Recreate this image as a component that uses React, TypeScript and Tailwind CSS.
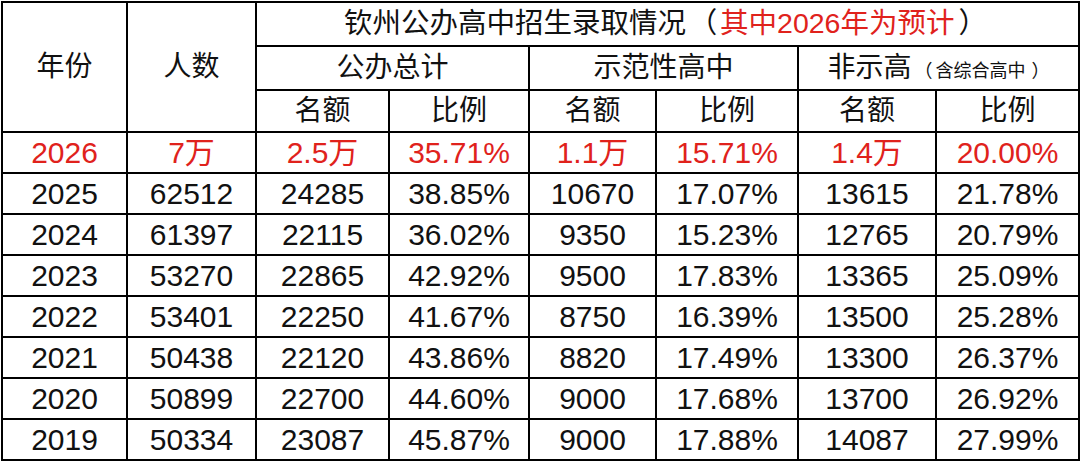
const rows = [
  ['2025', '62512', '24285', '38.85%', '10670', '17.07%', '13615', '21.78%'],
  ['2024', '61397', '22115', '36.02%', '9350', '15.23%', '12765', '20.79%'],
  ['2023', '53270', '22865', '42.92%', '9500', '17.83%', '13365', '25.09%'],
  ['2022', '53401', '22250', '41.67%', '8750', '16.39%', '13500', '25.28%'],
  ['2021', '50438', '22120', '43.86%', '8820', '17.49%', '13300', '26.37%'],
  ['2020', '50899', '22700', '44.60%', '9000', '17.68%', '13700', '26.92%'],
  ['2019', '50334', '23087', '45.87%', '9000', '17.88%', '14087', '27.99%'],
];

const forecast = ['2026', '7万', '2.5万', '35.71%', '1.1万', '15.71%', '1.4万', '20.00%'];

const widths = [125, 129, 133, 140, 127, 142, 138, 143];

const cell = 'border-2 border-black text-center align-middle p-0 leading-none';

export default function App() {
  return (
    <div
      className="w-[1080px] h-[461px] bg-white overflow-hidden text-[#111]"
      style={{ fontFamily: '"Liberation Sans", "Noto Sans CJK SC", sans-serif' }}
    >
      <table className="border-collapse table-fixed w-[1077px] mt-[1px] ml-[1px]">
        <colgroup>
          {widths.map((w, i) => (
            <col key={i} style={{ width: w }} />
          ))}
        </colgroup>
        <thead>
          <tr className="h-[44px]">
            <th rowSpan={3} className={`${cell} font-normal text-[28px]`}>年份</th>
            <th rowSpan={3} className={`${cell} font-normal text-[28px]`}>人数</th>
            <th colSpan={6} className={`${cell} font-normal text-[28.5px] pb-[2px] pr-[4px] whitespace-nowrap`}>
              钦州公办高中招生录取情况
              <span className="inline-flex w-[34px] justify-center">（</span>
              <span className="text-[#e0221c]">其中2026年为预计</span>
              <span className="ml-[4px]">）</span>
            </th>
          </tr>
          <tr className="h-[44px]">
            <th colSpan={2} className={`${cell} font-normal text-[28px]`}>公办总计</th>
            <th colSpan={2} className={`${cell} font-normal text-[28px]`}>示范性高中</th>
            <th colSpan={2} className={`${cell} font-normal text-[28px] whitespace-nowrap`}>
              非示高
              <span className="text-[18px]">
                <span className="inline-flex w-[24px] justify-center">（</span>
                含综合高中
                <span className="ml-[6px]">）</span>
              </span>
            </th>
          </tr>
          <tr className="h-[42px]">
            {['名额', '比例', '名额', '比例', '名额', '比例'].map((t, i) => (
              <th key={i} className={`${cell} font-normal text-[28px]`}>{t}</th>
            ))}
          </tr>
        </thead>
        <tbody>
          <tr className="h-[41px] text-[#e0221c]">
            {forecast.map((v, i) => (
              <td key={i} className={`${cell} text-[30px]`}>{v}</td>
            ))}
          </tr>
          {rows.map((r) => (
            <tr key={r[0]} className="h-[41px]">
              {r.map((v, i) => (
                <td key={i} className={`${cell} text-[30px]`}>{v}</td>
              ))}
            </tr>
          ))}
        </tbody>
      </table>
    </div>
  );
}
